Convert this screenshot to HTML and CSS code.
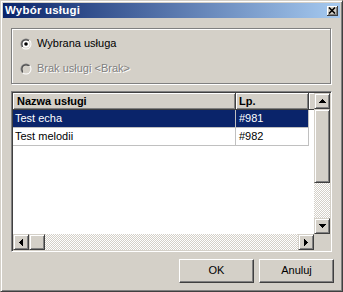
FILE: index.html
```html
<!DOCTYPE html>
<html lang="pl">
<head>
  <meta charset="UTF-8">
  <title>Wybór usługi</title>
  <link rel="stylesheet" href="styles.css">
</head>
<body>
<div class="window">
  <div class="titlebar">
    <span class="title">Wybór usługi</span>
    <div class="close">
      <svg width="8" height="7" viewBox="0 0 8 7">
        <path d="M1 0.5 L7 6.5 M7 0.5 L1 6.5" stroke="#000" stroke-width="1.6" fill="none"/>
      </svg>
    </div>
  </div>
  <div class="content">
    <div class="group">
      <div class="radio">
        <svg width="12" height="12" viewBox="0 0 12 12">
          <defs>
            <linearGradient id="rOut" x1="0" y1="0" x2="1" y2="1">
              <stop offset="0.5" stop-color="#808080"/>
              <stop offset="0.5" stop-color="#ffffff"/>
            </linearGradient>
            <linearGradient id="rIn" x1="0" y1="0" x2="1" y2="1">
              <stop offset="0.5" stop-color="#404040"/>
              <stop offset="0.5" stop-color="#d4d0c8"/>
            </linearGradient>
          </defs>
          <circle cx="6" cy="6" r="5.5" fill="url(#rOut)"/>
          <circle cx="6" cy="6" r="4.5" fill="url(#rIn)"/>
          <circle cx="6" cy="6" r="3.5" fill="#fff"/>
          <circle cx="6" cy="6" r="1.8" fill="#000"/>
        </svg>
        <span>Wybrana usługa</span>
      </div>
      <div class="radio disabled">
        <svg width="12" height="12" viewBox="0 0 12 12">
          <circle cx="6" cy="6" r="5.5" fill="url(#rOut)"/>
          <circle cx="6" cy="6" r="4.5" fill="url(#rIn)"/>
          <circle cx="6" cy="6" r="3.5" fill="#d4d0c8"/>
        </svg>
        <span>Brak usługi &lt;Brak&gt;</span>
      </div>
    </div>

    <div class="listview">
      <div class="lv-main">
        <div class="lv-body">
          <div class="lv-header">
            <div class="hcell col-name">Nazwa usługi</div>
            <div class="hcell col-lp">Lp.</div>
            <div class="hcell col-fill"></div>
          </div>
          <div class="lv-row selected">
            <div class="cell col-name">Test echa</div>
            <div class="cell col-lp">#981</div>
          </div>
          <div class="lv-row">
            <div class="cell col-name">Test melodii</div>
            <div class="cell col-lp">#982</div>
          </div>
        </div>
        <div class="vscroll">
          <div class="sbtn">
            <svg width="7" height="4" viewBox="0 0 7 4"><path d="M3 0h1v1h1v1h1v1h1v1H0V3h1V2h1V1h1z" fill="#000"/></svg>
          </div>
          <div class="sbtn thumb-v"></div>
          <div class="track"></div>
          <div class="sbtn">
            <svg width="7" height="4" viewBox="0 0 7 4"><path d="M0 0h7v1H6v1H5v1H4v1H3V3H2V2H1V1H0z" fill="#000"/></svg>
          </div>
        </div>
      </div>
      <div class="hscroll">
        <div class="sbtn">
          <svg width="4" height="7" viewBox="0 0 4 7"><path d="M3 0h1v7H3V6H2V5H1V4H0V3h1V2h1V1h1z" fill="#000"/></svg>
        </div>
        <div class="sbtn"></div>
        <div class="track"></div>
        <div class="sbtn">
          <svg width="4" height="7" viewBox="0 0 4 7"><path d="M0 0h1v1h1v1h1v1h1v1H3v1H2v1H1v1H0z" fill="#000"/></svg>
        </div>
        <div class="corner"></div>
      </div>
    </div>

    <div class="buttons">
      <div class="button">OK</div>
      <div class="button">Anuluj</div>
    </div>
  </div>
</div>
</body>
</html>
```
FILE: styles.css
```css
* {
  box-sizing: border-box;
}

body {
  margin: 0;
  background: #d4d0c8;
  font-family: "Liberation Sans", Arial, sans-serif;
  font-size: 11px;
  color: #000;
}

.window {
  width: 343px;
  height: 292px;
  background: #d4d0c8;
  border: 1px solid;
  border-color: #d4d0c8 #404040 #404040 #d4d0c8;
  box-shadow: inset 1px 1px #fff, inset -1px -1px #808080;
  padding: 2px;
}

.titlebar {
  height: 15px;
  display: flex;
  align-items: center;
  justify-content: space-between;
  padding-left: 2px;
  background: linear-gradient(90deg, #0a246a 0%, #a6caf0 100%);
}

.title {
  color: #fff;
  font-weight: bold;
  font-size: 11.5px;
  line-height: 15px;
  letter-spacing: 0.2px;
}

.close {
  width: 11px;
  height: 10px;
  margin-right: 2px;
  margin-top: 1px;
  background: #d4d0c8;
  border-right: 1px solid #404040;
  border-bottom: 1px solid #404040;
  box-shadow: inset 1px 1px #fff, inset -1px -1px #808080;
  display: flex;
  align-items: center;
  justify-content: center;
}

.close svg {
  display: block;
}

.content {
  padding: 10px 8px 0 8px;
}

.group {
  height: 56px;
  margin-right: 1px;
  border: 1px solid #808080;
  box-shadow: inset 1px 1px #fff, 1px 1px #fff;
  padding: 8px 0 8px 8px;
  display: flex;
  flex-direction: column;
  gap: 12px;
}

.radio {
  height: 13px;
  display: flex;
  align-items: center;
  gap: 5px;
  line-height: 13px;
}

.radio svg {
  display: block;
  flex: 0 0 auto;
}

.radio.disabled span {
  color: #808080;
  text-shadow: 1px 1px #fff;
}

.listview {
  margin-top: 7px;
  height: 161px;
  border: 1px solid;
  border-color: #808080 #fff #fff #808080;
  box-shadow: inset 1px 1px #404040, inset -1px -1px #d4d0c8;
  padding: 1px;
  display: flex;
  flex-direction: column;
}

.lv-main {
  height: 141px;
  display: flex;
}

.lv-body {
  flex: 1;
  background: #fff;
  overflow: hidden;
}

.lv-header {
  display: flex;
  height: 17px;
}

.hcell {
  background: #d4d0c8;
  border-right: 1px solid #404040;
  border-bottom: 1px solid #404040;
  box-shadow: inset 1px 1px #fff, inset -1px -1px #808080;
  font-weight: bold;
  line-height: 16px;
  padding-left: 4px;
  white-space: nowrap;
}

.col-name {
  width: 223px;
}

.col-lp {
  width: 73px;
}

.hcell.col-lp {
  padding-left: 3px;
}

.col-fill {
  flex: 1;
  border-right: none;
  box-shadow: inset 1px 1px #fff;
}

.lv-row {
  display: flex;
  height: 18px;
}

.cell {
  border-right: 1px solid #c0c0c0;
  border-bottom: 1px solid #c0c0c0;
  line-height: 17px;
  padding-left: 3px;
  white-space: nowrap;
}

.lv-row .col-name {
  padding-left: 2px;
}

.lv-row.selected .cell {
  background: #0a246a;
  color: #fff;
}

.vscroll {
  width: 16px;
  display: flex;
  flex-direction: column;
}

.sbtn {
  width: 16px;
  height: 16px;
  flex: 0 0 auto;
  background: #d4d0c8;
  border: 1px solid;
  border-color: #d4d0c8 #404040 #404040 #d4d0c8;
  box-shadow: inset 1px 1px #fff, inset -1px -1px #808080;
  display: flex;
  align-items: center;
  justify-content: center;
}

.sbtn svg {
  display: block;
}

.thumb-v {
  height: 74px;
}

.track {
  flex: 1;
  background-color: #d4d0c8;
  background-image: conic-gradient(#fff 25%, #d4d0c8 0 50%, #fff 0 75%, #d4d0c8 0);
  background-size: 2px 2px;
}

.hscroll {
  height: 16px;
  display: flex;
}

.corner {
  width: 16px;
  background: #d4d0c8;
}

.buttons {
  margin-top: 7px;
  margin-right: -2px;
  display: flex;
  justify-content: flex-end;
  gap: 5px;
}

.button {
  width: 75px;
  height: 24px;
  background: #d4d0c8;
  border: 1px solid;
  border-color: #fff #404040 #404040 #fff;
  box-shadow: inset -1px -1px #808080;
  text-align: center;
  line-height: 21px;
}
```
